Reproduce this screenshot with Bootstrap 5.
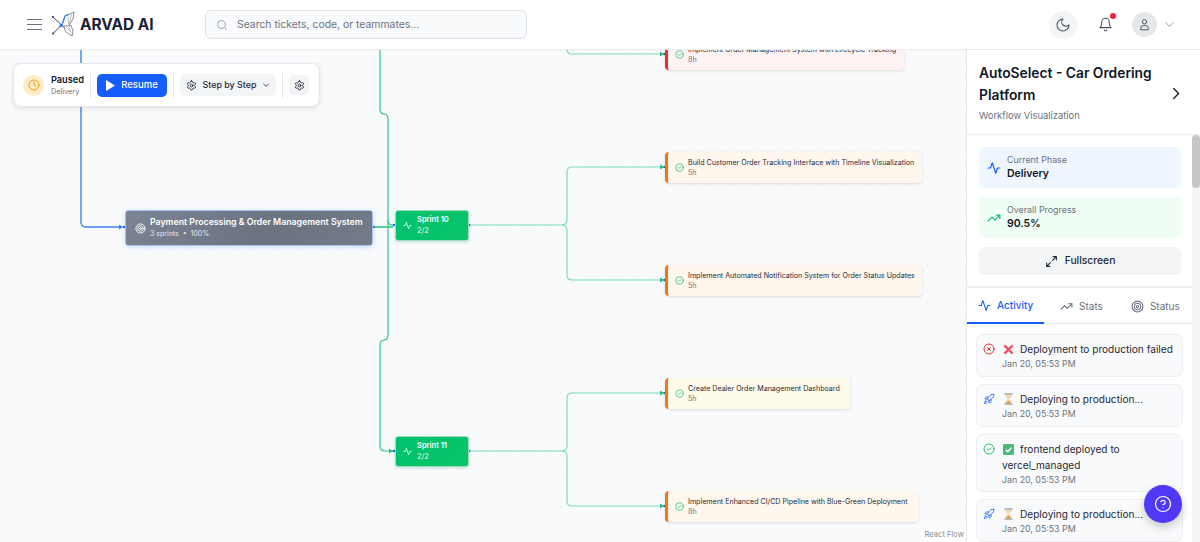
<!DOCTYPE html>
<html>
<head>
    <title>ARVAD AI - Workflow</title>
    <link rel="stylesheet" href="https://cdn.jsdelivr.net/npm/bootstrap@5.3.0/dist/css/bootstrap.min.css">
    <style>
        html, body { height: 100%; overflow: hidden; }
        body { font-family: Inter, "Liberation Sans", sans-serif; color: #111827; background: #fff; }
        svg { display: block; flex: none; }
        .ic { fill: none; stroke: currentColor; stroke-linecap: round; stroke-linejoin: round; }

        .top-bar { height: 50px; border-bottom: 1px solid #e9ebef; padding-left: 27px; }
        .menu-btn { color: #6b7280; margin-right: 10px; }
        .brand-name { width: 78px; font-size: 15.4px; font-weight: 700; color: #1a2233; margin-left: 3px; white-space: nowrap; }
        .search-box { width: 322px; height: 29px; margin-left: 47px; background: #f9fafb; border: 1px solid #dfe3e8; border-radius: 6px; padding-left: 10px; color: #6b7280; font-size: 10.4px; gap: 9px; }
        .search-icon { color: #9ca3af; }
        .top-right { margin-left: auto; padding-right: 25px; color: #4b5563; }
        .round-btn { width: 28px; height: 28px; background: #f3f4f6; border-radius: 50%; }
        .bell-wrap { width: 28px; height: 28px; margin-left: 14px; position: relative; }
        .bell-dot { position: absolute; top: 2px; right: 3px; width: 6px; height: 6px; border-radius: 50%; background: #ef233c; }
        .user-btn { width: 25px; height: 25px; margin-left: 13px; background: #e5e7eb; border-radius: 50%; }
        .user-caret { color: #6b7280; margin-left: 7px; }

        .work-row { height: 492px; }
        .flow-canvas { position: relative; width: 966px; overflow: hidden; background-color: #f9fafc; background-image: radial-gradient(#dcdfe4 0.7px, transparent 0.8px); background-size: 12.67px 12.67px; background-position: -3px -5.7px; }
        .edges { position: absolute; left: 0; top: 0; }

        .ctrl-panel { position: absolute; left: 13px; top: 13px; height: 44px; width: 307px; background: #fff; border: 1px solid #e5e7eb; border-radius: 8px; box-shadow: 0 2px 5px rgba(0,0,0,.09); padding-left: 9px; }
        .pause-icon { width: 21px; height: 21px; border-radius: 50%; background: #fdecc8; color: #f59e0b; margin-right: 7px; }
        .pause-text { width: 39px; }
        .pause-title { font-size: 9.2px; font-weight: 600; line-height: 12px; }
        .pause-sub { font-size: 7.3px; color: #6b7280; line-height: 11px; }
        .ctrl-sep { width: 1px; height: 25px; background: #e5e7eb; }
        .resume-btn { width: 70px; height: 23px; background: #155dfc; color: #fff; border-radius: 5px; font-size: 9.5px; font-weight: 500; gap: 6px; margin: 0 6px; }
        .step-btn { width: 96px; height: 22px; background: #f3f4f6; border-radius: 5px; font-size: 8.9px; font-weight: 500; color: #1f2937; margin: 0 6px; gap: 6px; }
        .gear-btn { width: 20px; height: 20px; background: #f3f4f6; border-radius: 5px; margin-left: 6px; color: #1f2937; }

        .flow-node { position: absolute; }
        .phase-node { left: 125px; top: 160px; width: 248px; height: 36px; border-radius: 3px; border: 1px solid #a8c2f5; background: linear-gradient(135deg, #7c8494, #6b7280 60%, #747b89); color: #fff; padding-left: 9px; gap: 4px; box-shadow: 0 1px 4px rgba(59,130,246,.25); }
        .phase-title { font-size: 8.75px; font-weight: 600; line-height: 11px; white-space: nowrap; }
        .phase-sub { font-size: 7px; line-height: 10px; margin-top: 1px; color: #e5e7eb; }
        .sprint-node { left: 395px; width: 74px; height: 31px; border-radius: 3px; border: 1px solid #9fdcc0; background: linear-gradient(135deg, #00c26f, #0ac468); color: #fff; padding-left: 7px; gap: 5px; box-shadow: 0 1px 3px rgba(0,160,90,.25); }
        .sprint-title { font-size: 7.5px; font-weight: 600; line-height: 10px; }
        .sprint-sub { font-size: 7.5px; line-height: 11px; color: #e4f8ee; }
        .task-node { left: 665px; height: 31px; border-left: 3px solid #f97316; border-radius: 4px; background: #fff7ed; box-shadow: 0 1px 3px rgba(0,0,0,.12); padding-left: 7px; gap: 4px; color: #1f2937; }
        .task-yellow { background: #fffbeb; }
        .task-red { background: #fef2f2; border-left-color: #ef2b2d; }
        .task-title { font-size: 7.1px; line-height: 10px; white-space: nowrap; padding-top: 1px; }
        .task-time { font-size: 7.1px; line-height: 10px; color: #6b7280; }
        .check-ic { color: #1fc16b; }
        .flow-credit { position: absolute; right: 0; bottom: 0; padding: 2px 2px 2px 4px; font-size: 7.6px; color: #8a8f98; background: rgba(255,255,255,.6); }

        .side-panel { position: relative; width: 234px; border-left: 1px solid #e5e7eb; overflow: hidden; background: #fff; }
        .side-head { height: 85px; padding: 12px 17px 0 12px; border-bottom: 1px solid #eceef1; }
        .side-title { font-size: 13.8px; font-weight: 600; line-height: 22px; color: #111827; }
        .side-sub { font-size: 9.4px; color: #6b7280; margin-top: 3px; }
        .chevron-wrap { padding-top: 24px; color: #111827; }
        .side-scroll { position: absolute; right: 0; top: 85px; bottom: 0; width: 8px; background: #f5f5f5; }
        .side-thumb { height: 53px; background: #c4c6c9; border-radius: 4px; }
        .side-stats { padding: 12px 19px 0 12px; height: 153px; border-bottom: 2px solid #f1f2f4; }
        .stat-box { height: 41px; border-radius: 6px; margin-bottom: 9px; padding-left: 8px; gap: 6px; }
        .stat-blue { background: #eff6ff; color: #155dfc; }
        .stat-green { background: #f0fdf4; color: #00c26f; }
        .stat-label { font-size: 8.9px; color: #6b7280; line-height: 12px; }
        .stat-value { font-size: 10.5px; font-weight: 600; color: #111827; line-height: 15px; }
        .full-btn { height: 28px; background: #f3f4f6; border-radius: 6px; font-size: 10.3px; font-weight: 500; color: #1f2937; gap: 7px; }
        .side-tabs { height: 36px; border-bottom: 1px solid #e5e7eb; margin-right: 8px; font-size: 10px; color: #6b7280; }
        .side-tab { gap: 6px; height: 36px; }
        .tab-on { width: 78px; color: #155dfc; border-bottom: 2px solid #155dfc; font-weight: 500; }
        .tab-stats { width: 75px; }
        .tab-status { width: 74px; }
        .feed { padding: 10px 17px 0 9px; }
        .feed-item { background: #f9fafb; border: 1px solid #eceef1; border-radius: 7px; padding: 6px 6px 0 6px; margin-bottom: 7px; height: 43px; gap: 7px; }
        .feed-tall { height: 58px; }
        .feed-line { font-size: 10.1px; line-height: 16px; color: #1f2937; }
        .feed-icon { margin-top: 2px; }
        .feed-emoji { vertical-align: -2px; margin: 0 6px 0 1px; }
        .feed-time { font-size: 8.8px; line-height: 14px; color: #6b7280; }
        .help-fab { position: absolute; left: 177px; top: 435px; width: 38px; height: 38px; border-radius: 50%; background: #4f39f6; color: #fff; box-shadow: 0 4px 10px rgba(0,0,0,.2); }
    </style>
</head>
<body>
<header class="top-bar d-flex align-items-center">
    <div class="menu-btn">
        <svg class="ic" width="15" height="13" viewBox="0 0 15 13" stroke-width="1.2"><path d="M0 1.500h15M0 6.500h15M0 11.500h15"/></svg>
    </div>
    <!-- butterfly logo -->
    <svg width="25" height="27" viewBox="0 0 25 27" fill="none" stroke-linecap="round" stroke-linejoin="round">
        <path d="M1 6l19 18M1 22.500l8-8" stroke="#2b3346" stroke-width=".9"/>
        <path d="M10 14l3-9 9-4-1 7-4 6" fill="#fff" stroke="#7a8290" stroke-width=".9"/>
        <path d="M10 14l3-9 3-1.500" stroke="#3b82f6" stroke-width="1.300"/>
        <path d="M16 4l.5 9M19.500 3l-2 9" stroke="#9aa1ac" stroke-width=".7"/>
        <path d="M12 15l7-.5 2 5.500-1 5-6-4z" fill="#fff" stroke="#7a8290" stroke-width=".9"/>
        <path d="M14 16l5 5M17 15l1.500 6" stroke="#9aa1ac" stroke-width=".7"/>
        <circle cx="9" cy="14.500" r="1.500" fill="#2f6fed"/>
        <circle cx="1" cy="6" r="1" fill="#2b3346"/><circle cx="1" cy="22.500" r="1" fill="#2b3346"/>
        <circle cx="24" cy="1" r=".5" fill="#9aa1ac"/>
    </svg>
    <div class="brand-name">ARVAD AI</div>
    <div class="search-box d-flex align-items-center">
        <svg class="ic search-icon" width="12" height="12" viewBox="0 0 24 24" stroke-width="2"><circle cx="11" cy="11" r="8"/><path d="m21 21-4.300-4.300"/></svg>
        <span>Search tickets, code, or teammates...</span>
    </div>
    <div class="top-right d-flex align-items-center">
        <div class="round-btn d-flex align-items-center justify-content-center">
            <svg class="ic" width="16" height="16" viewBox="0 0 24 24" stroke-width="1.600"><path d="M12 3a6 6 0 0 0 9 9 9 9 0 1 1-9-9z"/></svg>
        </div>
        <div class="bell-wrap d-flex align-items-center justify-content-center">
            <svg class="ic" width="15" height="15" viewBox="0 0 24 24" stroke-width="1.700"><path d="M6 8a6 6 0 0 1 12 0c0 7 3 9 3 9H3s3-2 3-9"/><path d="M10.300 21a1.940 1.940 0 0 0 3.400 0"/></svg>
            <span class="bell-dot"></span>
        </div>
        <div class="user-btn d-flex align-items-center justify-content-center">
            <svg class="ic" width="13" height="13" viewBox="0 0 24 24" stroke-width="1.800"><circle cx="12" cy="7" r="4"/><path d="M5 21v-2a5 5 0 0 1 5-5h4a5 5 0 0 1 5 5v2z"/></svg>
        </div>
        <svg class="ic user-caret" width="11" height="11" viewBox="0 0 24 24" stroke-width="1.600"><path d="m4 8 8 8 8-8"/></svg>
    </div>
</header>
<div class="work-row d-flex">
    <main class="flow-canvas">
        <svg class="edges" width="966" height="492" viewBox="0 50 966 492" fill="none">
            <path d="M81 49V222q0 5 5 5H120" stroke="#3b82f6" stroke-width="1.400"/>
            <path d="M119 224.500l4 2.500-4 2.500z" fill="#3b82f6"/>
            <g stroke="#2fc58d" stroke-width="1.200">
                <path d="M380 49V109q0 5 4 5 4 0 4 5V220q0 5 4 5h3"/>
                <path d="M388 220V335q0 5-4 5-4 0-4 5V446q0 5 5 5h8"/>
                <path d="M373 227h20" stroke-width="1.600"/>
            </g>
            <g stroke="#7cdcb6" stroke-width="1.200">
                <path d="M468 225H562q5 0 5-5V172q0-5 5-5h90"/>
                <path d="M562 225q5 0 5 5V275q0 5 5 5h90"/>
                <path d="M567 49v0q0 5 5 5h90"/>
                <path d="M468 451H562q5 0 5-5V398q0-5 5-5h90"/>
                <path d="M562 451q5 0 5 5V501q0 5 5 5h90"/>
            </g>
            <g fill="#1fc183">
                <path d="M660 51.500l4 2.500-4 2.500z"/><path d="M660 164.500l4 2.500-4 2.500z"/><path d="M660 277.500l4 2.500-4 2.500z"/>
                <path d="M660 390.500l4 2.500-4 2.500z"/><path d="M660 503.500l4 2.500-4 2.500z"/><path d="M389 448.500l4 2.500-4 2.500z"/>
            </g>
            <g fill="#2563eb">
                <circle cx="373.500" cy="227" r="1.300"/><circle cx="394" cy="225" r="1.300"/><circle cx="469" cy="225" r="1.300"/>
                <circle cx="124" cy="227" r="1.300"/><circle cx="394" cy="451" r="1.300"/><circle cx="469" cy="451" r="1.300"/>
            </g>
            <g fill="#5b6472">
                <circle cx="664.500" cy="54" r="1.300"/><circle cx="664.500" cy="167" r="1.300"/><circle cx="664.500" cy="280" r="1.300"/>
                <circle cx="664.500" cy="393" r="1.300"/><circle cx="664.500" cy="506" r="1.300"/>
            </g>
        </svg>

        <div class="flow-node phase-node d-flex align-items-center">
            <svg class="ic" width="11" height="11" viewBox="0 0 24 24" stroke-width="2"><circle cx="12" cy="12" r="10"/><circle cx="12" cy="12" r="6"/><circle cx="12" cy="12" r="2"/></svg>
            <div>
                <div class="phase-title">Payment Processing &amp; Order Management System</div>
                <div class="phase-sub">3 sprints &nbsp;•&nbsp; 100%</div>
            </div>
        </div>
        <div class="flow-node sprint-node d-flex align-items-center" style="top: 160px">
            <svg class="ic" width="9" height="9" viewBox="0 0 24 24" stroke-width="2"><path d="M22 12h-4l-3 9L9 3l-3 9H2"/></svg>
            <div><div class="sprint-title">Sprint 10</div><div class="sprint-sub">2/2</div></div>
        </div>
        <div class="flow-node sprint-node d-flex align-items-center" style="top: 386px">
            <svg class="ic" width="9" height="9" viewBox="0 0 24 24" stroke-width="2"><path d="M22 12h-4l-3 9L9 3l-3 9H2"/></svg>
            <div><div class="sprint-title">Sprint 11</div><div class="sprint-sub">2/2</div></div>
        </div>

        <div class="flow-node task-node task-red d-flex align-items-center" style="top: -11px; width: 239px">
            <svg class="ic check-ic" width="9" height="9" viewBox="0 0 24 24" stroke-width="2"><circle cx="12" cy="12" r="10"/><path d="m8.500 12 2.500 2.500 5-5"/></svg>
            <div><div class="task-title">Implement Order Management System with Lifecycle Tracking</div><div class="task-time">8h</div></div>
        </div>
        <div class="flow-node task-node d-flex align-items-center" style="top: 102px; width: 257px">
            <svg class="ic check-ic" width="9" height="9" viewBox="0 0 24 24" stroke-width="2"><circle cx="12" cy="12" r="10"/><path d="m8.500 12 2.500 2.500 5-5"/></svg>
            <div><div class="task-title">Build Customer Order Tracking Interface with Timeline Visualization</div><div class="task-time">5h</div></div>
        </div>
        <div class="flow-node task-node d-flex align-items-center" style="top: 215px; width: 257px">
            <svg class="ic check-ic" width="9" height="9" viewBox="0 0 24 24" stroke-width="2"><circle cx="12" cy="12" r="10"/><path d="m8.500 12 2.500 2.500 5-5"/></svg>
            <div><div class="task-title">Implement Automated Notification System for Order Status Updates</div><div class="task-time">5h</div></div>
        </div>
        <div class="flow-node task-node task-yellow d-flex align-items-center" style="top: 328px; width: 185px">
            <svg class="ic check-ic" width="9" height="9" viewBox="0 0 24 24" stroke-width="2"><circle cx="12" cy="12" r="10"/><path d="m8.500 12 2.500 2.500 5-5"/></svg>
            <div><div class="task-title">Create Dealer Order Management Dashboard</div><div class="task-time">5h</div></div>
        </div>
        <div class="flow-node task-node d-flex align-items-center" style="top: 441px; width: 253px">
            <svg class="ic check-ic" width="9" height="9" viewBox="0 0 24 24" stroke-width="2"><circle cx="12" cy="12" r="10"/><path d="m8.500 12 2.500 2.500 5-5"/></svg>
            <div><div class="task-title">Implement Enhanced CI/CD Pipeline with Blue-Green Deployment</div><div class="task-time">8h</div></div>
        </div>

        <div class="ctrl-panel d-flex align-items-center">
            <div class="pause-icon d-flex align-items-center justify-content-center">
                <svg class="ic" width="12" height="12" viewBox="0 0 24 24" stroke-width="2"><circle cx="12" cy="12" r="10"/><path d="M12 6v6l4 2"/></svg>
            </div>
            <div class="pause-text">
                <div class="pause-title">Paused</div>
                <div class="pause-sub">Delivery</div>
            </div>
            <div class="ctrl-sep"></div>
            <div class="resume-btn d-flex align-items-center justify-content-center">
                <svg width="9" height="11" viewBox="0 0 9 11" fill="#fff"><path d="M0 0l9 5.500-9 5.500z"/></svg>
                Resume
            </div>
            <div class="ctrl-sep"></div>
            <div class="step-btn d-flex align-items-center justify-content-center">
                <svg class="ic" width="11" height="11" viewBox="0 0 24 24" stroke-width="2"><path d="M12.200 2h-.4a2 2 0 0 0-2 2v.2a2 2 0 0 1-1 1.700l-.4.300a2 2 0 0 1-2 0l-.2-.1a2 2 0 0 0-2.700.7l-.2.400a2 2 0 0 0 .7 2.700l.2.100a2 2 0 0 1 1 1.700v.5a2 2 0 0 1-1 1.700l-.2.100a2 2 0 0 0-.7 2.700l.2.400a2 2 0 0 0 2.700.7l.2-.1a2 2 0 0 1 2 0l.4.300a2 2 0 0 1 1 1.700v.2a2 2 0 0 0 2 2h.4a2 2 0 0 0 2-2v-.2a2 2 0 0 1 1-1.700l.4-.3a2 2 0 0 1 2 0l.2.100a2 2 0 0 0 2.700-.7l.2-.4a2 2 0 0 0-.7-2.700l-.2-.1a2 2 0 0 1-1-1.700v-.5a2 2 0 0 1 1-1.700l.2-.1a2 2 0 0 0 .7-2.700l-.2-.4a2 2 0 0 0-2.700-.7l-.2.100a2 2 0 0 1-2 0l-.4-.3a2 2 0 0 1-1-1.700V4a2 2 0 0 0-2-2z"/><circle cx="12" cy="12" r="3"/></svg>
                Step by Step
                <svg class="ic" width="8" height="8" viewBox="0 0 24 24" stroke-width="2.500"><path d="m5 9 7 7 7-7"/></svg>
            </div>
            <div class="ctrl-sep"></div>
            <div class="gear-btn d-flex align-items-center justify-content-center">
                <svg class="ic" width="11" height="11" viewBox="0 0 24 24" stroke-width="2"><path d="M12.200 2h-.4a2 2 0 0 0-2 2v.2a2 2 0 0 1-1 1.700l-.4.300a2 2 0 0 1-2 0l-.2-.1a2 2 0 0 0-2.700.7l-.2.400a2 2 0 0 0 .7 2.700l.2.100a2 2 0 0 1 1 1.700v.5a2 2 0 0 1-1 1.700l-.2.100a2 2 0 0 0-.7 2.700l.2.400a2 2 0 0 0 2.700.7l.2-.1a2 2 0 0 1 2 0l.4.300a2 2 0 0 1 1 1.700v.2a2 2 0 0 0 2 2h.4a2 2 0 0 0 2-2v-.2a2 2 0 0 1 1-1.700l.4-.3a2 2 0 0 1 2 0l.2.100a2 2 0 0 0 2.700-.7l.2-.4a2 2 0 0 0-.7-2.700l-.2-.1a2 2 0 0 1-1-1.700v-.5a2 2 0 0 1 1-1.700l.2-.1a2 2 0 0 0 .7-2.700l-.2-.4a2 2 0 0 0-2.700-.7l-.2.100a2 2 0 0 1-2 0l-.4-.3a2 2 0 0 1-1-1.700V4a2 2 0 0 0-2-2z"/><circle cx="12" cy="12" r="3"/></svg>
            </div>
        </div>
        <div class="flow-credit">React Flow</div>
    </main>

    <aside class="side-panel">
        <div class="side-head d-flex">
            <div class="flex-grow-1">
                <div class="side-title">AutoSelect - Car Ordering Platform</div>
                <div class="side-sub">Workflow Visualization</div>
            </div>
            <div class="chevron-wrap">
                <svg class="ic" width="15" height="15" viewBox="0 0 24 24" stroke-width="2"><path d="m9 4 8 8-8 8"/></svg>
            </div>
        </div>
        <div class="side-stats">
            <div class="stat-box stat-blue d-flex align-items-center">
                <svg class="ic" width="14" height="14" viewBox="0 0 24 24" stroke-width="2"><path d="M22 12h-4l-3 9L9 3l-3 9H2"/></svg>
                <div><div class="stat-label">Current Phase</div><div class="stat-value">Delivery</div></div>
            </div>
            <div class="stat-box stat-green d-flex align-items-center">
                <svg class="ic" width="14" height="14" viewBox="0 0 24 24" stroke-width="2"><path d="M22 7l-8.500 8.500-5-5L2 17"/><path d="M16 7h6v6"/></svg>
                <div><div class="stat-label">Overall Progress</div><div class="stat-value">90.5%</div></div>
            </div>
            <div class="full-btn d-flex align-items-center justify-content-center">
                <svg class="ic" width="13" height="13" viewBox="0 0 24 24" stroke-width="2"><path d="M15 3h6v6M21 3l-7 7M9 21H3v-6M3 21l7-7"/></svg>
                Fullscreen
            </div>
        </div>
        <div class="side-tabs d-flex">
            <div class="side-tab tab-on d-flex align-items-center justify-content-center">
                <svg class="ic" width="13" height="13" viewBox="0 0 24 24" stroke-width="2"><path d="M22 12h-4l-3 9L9 3l-3 9H2"/></svg>Activity
            </div>
            <div class="side-tab tab-stats d-flex align-items-center justify-content-center">
                <svg class="ic" width="13" height="13" viewBox="0 0 24 24" stroke-width="2"><path d="M22 7l-8.500 8.500-5-5L2 17"/><path d="M16 7h6v6"/></svg>Stats
            </div>
            <div class="side-tab tab-status d-flex align-items-center justify-content-center">
                <svg class="ic" width="13" height="13" viewBox="0 0 24 24" stroke-width="2"><circle cx="12" cy="12" r="10"/><circle cx="12" cy="12" r="6"/><circle cx="12" cy="12" r="2"/></svg>Status
            </div>
        </div>
        <div class="feed">
            <div class="feed-item d-flex">
                <svg class="ic feed-icon" width="12" height="12" viewBox="0 0 24 24" color="#ef2b2d" stroke-width="2"><circle cx="12" cy="12" r="10"/><path d="m15 9-6 6M9 9l6 6"/></svg>
                <div>
                    <div class="feed-line"><svg class="feed-emoji d-inline-block" width="11" height="11" viewBox="0 0 12 12" fill="none" stroke="#f0525f" stroke-width="2.400"><path d="M1.500 1.500l9 9M10.500 1.500l-9 9"/></svg>Deployment to production failed</div>
                    <div class="feed-time">Jan 20, 05:53 PM</div>
                </div>
            </div>
            <div class="feed-item d-flex">
                <svg class="ic feed-icon" width="12" height="12" viewBox="0 0 24 24" color="#3b78f6" stroke-width="2"><path d="M4.500 16.500c-1.500 1.300-2 5-2 5s3.700-.5 5-2c.7-.8.700-2.100-.1-2.900a2.200 2.200 0 0 0-2.900-.1z"/><path d="m12 15-3-3a22 22 0 0 1 2-3.900A12.900 12.900 0 0 1 22 2c0 2.700-.8 7.500-6 11a22.400 22.400 0 0 1-4 2z"/><path d="M9 12H4s.6-3 2-4c1.600-1.100 5 0 5 0M12 15v5s3-.6 4-2c1.100-1.600 0-5 0-5"/></svg>
                <div>
                    <div class="feed-line"><svg class="feed-emoji d-inline-block" width="11" height="12" viewBox="0 0 12 13"><path d="M2 1h8v2L7 6.500 10 10v2H2v-2l3-3.500L2 3z" fill="#f3d9b8"/><path d="M3 11.500h6L6 8z" fill="#e8963a"/><path d="M1.500 1h9M1.500 12h9" stroke="#9aa5b1" stroke-width="1.300"/></svg>Deploying to production...</div>
                    <div class="feed-time">Jan 20, 05:53 PM</div>
                </div>
            </div>
            <div class="feed-item feed-tall d-flex">
                <svg class="ic feed-icon" width="12" height="12" viewBox="0 0 24 24" color="#1fc16b" stroke-width="2"><circle cx="12" cy="12" r="10"/><path d="m8.500 12 2.500 2.500 5-5"/></svg>
                <div>
                    <div class="feed-line"><svg class="feed-emoji d-inline-block" width="11" height="11" viewBox="0 0 12 12"><rect width="12" height="12" rx="1.500" fill="#4cb877"/><path d="M3 6.200l2.200 2.200L9.200 4" fill="none" stroke="#fff" stroke-width="1.700"/></svg>frontend deployed to vercel_managed</div>
                    <div class="feed-time">Jan 20, 05:53 PM</div>
                </div>
            </div>
            <div class="feed-item d-flex">
                <svg class="ic feed-icon" width="12" height="12" viewBox="0 0 24 24" color="#3b78f6" stroke-width="2"><path d="M4.500 16.500c-1.500 1.300-2 5-2 5s3.700-.5 5-2c.7-.8.700-2.100-.1-2.900a2.200 2.200 0 0 0-2.900-.1z"/><path d="m12 15-3-3a22 22 0 0 1 2-3.900A12.900 12.900 0 0 1 22 2c0 2.700-.8 7.500-6 11a22.400 22.400 0 0 1-4 2z"/><path d="M9 12H4s.6-3 2-4c1.600-1.100 5 0 5 0M12 15v5s3-.6 4-2c1.100-1.600 0-5 0-5"/></svg>
                <div>
                    <div class="feed-line"><svg class="feed-emoji d-inline-block" width="11" height="12" viewBox="0 0 12 13"><path d="M2 1h8v2L7 6.500 10 10v2H2v-2l3-3.500L2 3z" fill="#f3d9b8"/><path d="M3 11.500h6L6 8z" fill="#e8963a"/><path d="M1.500 1h9M1.500 12h9" stroke="#9aa5b1" stroke-width="1.300"/></svg>Deploying to production...</div>
                    <div class="feed-time">Jan 20, 05:53 PM</div>
                </div>
            </div>
        </div>
        <div class="side-scroll"><div class="side-thumb"></div></div>
        <div class="help-fab d-flex align-items-center justify-content-center">
            <svg class="ic" width="18" height="18" viewBox="0 0 24 24" stroke-width="1.600"><circle cx="12" cy="12" r="10"/><path d="M9.100 9a3 3 0 0 1 5.800 1c0 2-3 3-3 3M12 17h.01"/></svg>
        </div>
    </aside>
</div>
<script src="https://cdn.jsdelivr.net/npm/bootstrap@5.3.0/dist/js/bootstrap.bundle.min.js"></script>
</body>
</html>
